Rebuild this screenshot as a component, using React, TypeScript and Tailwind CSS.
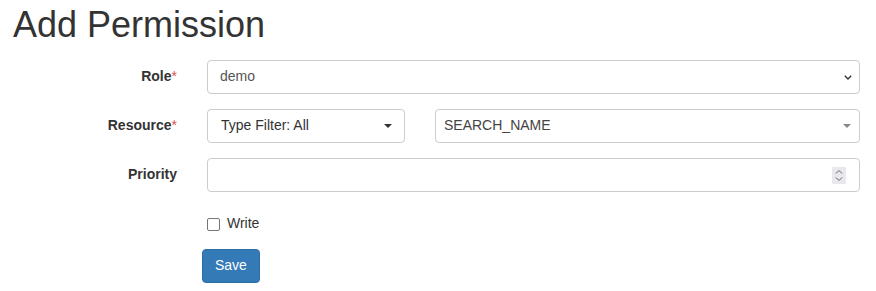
import React from "react";

function Chevron() {
  return (
    <svg width="8" height="5" viewBox="0 0 8 5" className="block">
      <path d="M0.8 0.8 L4 4 L7.2 0.8" fill="none" stroke="#333" strokeWidth="1.4" />
    </svg>
  );
}

function Label({ text, required }: { text: string; required?: boolean }) {
  return (
    <div className="w-[192px] shrink-0 pr-[15px] pt-[6px] text-right font-bold text-[#333]">
      {text}
      {required && <span className="font-normal text-[#d9534f]">*</span>}
    </div>
  );
}

export default function App() {
  return (
    <div className="w-[876px] h-[291px] overflow-hidden bg-white font-['Liberation_Sans',Arial,sans-serif] text-[14px] leading-[20px] text-[#333]">
      <h1 className="pl-[13px] pt-[5px] h-[45px] mb-[15px] text-[36px] leading-[40px] font-normal text-[#333]">
        Add Permission
      </h1>

      <div className="flex h-[34px] mb-[15px]">
        <Label text="Role" required />
        <div className="pl-[15px] w-[668px]">
          <div className="h-[34px] border border-[#ccc] rounded-[4px] pl-[12px] pr-[7px] pb-[2px] flex items-center justify-between text-[#555]">
            <span>demo</span>
            <span className="pt-[2px]">
              <Chevron />
            </span>
          </div>
        </div>
      </div>

      <div className="flex h-[34px] mb-[15px]">
        <Label text="Resource" required />
        <div className="pl-[15px] w-[668px] flex">
          <div className="w-[198px] h-[34px] border border-[#ccc] rounded-[4px] pl-[13px] pr-[12px] pb-[2px] flex items-center justify-between text-[#333]">
            <span>Type Filter: All</span>
            <span className="block mt-[2px] w-0 h-0 border-t-[4px] border-t-[#333] border-x-[4px] border-x-transparent" />
          </div>
          <div className="ml-[30px] flex-1 h-[34px] border border-[#ccc] rounded-[4px] pl-[8px] pr-[8px] pb-[2px] flex items-center justify-between text-[#444]">
            <span>SEARCH_NAME</span>
            <span className="block mt-[2px] w-0 h-0 border-t-[4px] border-t-[#888] border-x-[4px] border-x-transparent" />
          </div>
        </div>
      </div>

      <div className="flex h-[34px] mb-[15px]">
        <Label text="Priority" />
        <div className="pl-[15px] w-[668px]">
          <div className="h-[34px] border border-[#ccc] rounded-[4px] pr-[13px] flex items-center justify-end">
            <div className="w-[14px] h-[17px] bg-[#e9e9ed] rounded-[1px] flex flex-col items-center justify-center gap-[3px]">
              <svg width="8" height="4" viewBox="0 0 8 4" className="block">
                <path d="M0.7 3.5 L4 0.6 L7.3 3.5" fill="none" stroke="#6f6f6f" strokeWidth="1" />
              </svg>
              <svg width="8" height="4" viewBox="0 0 8 4" className="block">
                <path d="M0.7 0.5 L4 3.4 L7.3 0.5" fill="none" stroke="#6f6f6f" strokeWidth="1" />
              </svg>
            </div>
          </div>
        </div>
      </div>

      <div className="pl-[207px] pt-[6px] flex items-start h-[24px] mb-[18px]">
        <div className="mt-[5px] w-[13px] h-[13px] border-[1.5px] border-[#767676] rounded-[2px] bg-white shrink-0" />
        <span className="ml-[7px] text-[#333]">Write</span>
      </div>

      <div className="pl-[202px]">
        <button className="h-[34px] px-[12px] pt-[5px] pb-[7px] bg-[#337ab7] border border-[#2e6da4] rounded-[4px] text-white text-[14px] leading-[20px]">
          Save
        </button>
      </div>
    </div>
  );
}
